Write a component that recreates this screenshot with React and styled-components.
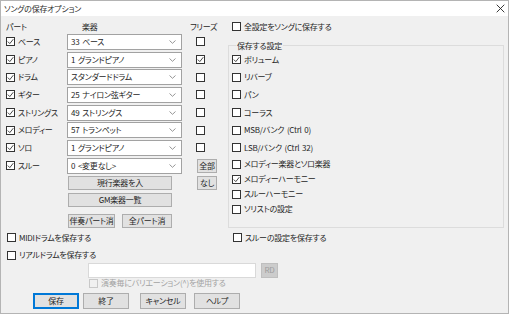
import React from 'react';
import styled, { createGlobalStyle } from 'styled-components';

const FONT = `"Noto Sans CJK JP", "Noto Sans", sans-serif`;

const GlobalStyle = createGlobalStyle`
  html, body { margin: 0; padding: 0; background: #f0f0f0; }
  * { box-sizing: border-box; }
`;

const Window = styled.div`
  width: 509px;
  height: 314px;
  border: 1px solid #b4b4b4;
  background: #f0f0f0;
  display: flex;
  flex-direction: column;
  font-family: ${FONT};
  font-size: 8px;
  letter-spacing: -0.25px;
  word-spacing: 1.2px;
  line-height: 1;
  color: #262626;
  font-feature-settings: "palt";
  overflow: hidden;
  white-space: nowrap;
`;

const TitleBar = styled.div`
  flex: none;
  height: 15px;
  background: #fff;
  display: flex;
  align-items: center;
  justify-content: space-between;
  padding: 0 3px 0 3px;
`;

const Title = styled.span`
  color: #2e2e2e;
`;

const Content = styled.div`
  flex: 1;
  display: flex;
  flex-direction: column;
  padding: 4px 4px 0 5px;
`;

const Top = styled.div`
  display: flex;
`;

const PartGrid = styled.div`
  width: 222px;
  flex: none;
  display: grid;
  grid-template-columns: 61px 115px 36px;
  grid-template-rows: 13px repeat(8, 17.7px) 17px 17px 19px;
  align-items: center;
`;

const Header = styled.span`
  justify-self: start;
  margin-left: ${(p) => p.$ml || 0}px;
`;

const CheckLabel = styled.label`
  display: flex;
  align-items: center;
  gap: ${(p) => (p.$gap != null ? p.$gap : 3)}px;
  color: ${(p) => (p.$disabled ? '#a3a3a3' : 'inherit')};
`;

const Box = styled.span`
  flex: none;
  width: 9px;
  height: 9px;
  border: 1px solid ${(p) => (p.$disabled ? '#c8c8c8' : '#333')};
  background: ${(p) => (p.$disabled ? '#f0f0f0' : '#fff')};
  display: flex;
  align-items: center;
  justify-content: center;
`;

const FreezeCell = styled.div`
  justify-self: center;
  display: flex;
`;

const Combo = styled.div`
  height: 16px;
  width: 115px;
  border: 1px solid #a2a2a2;
  background: #fff;
  display: flex;
  align-items: center;
  justify-content: space-between;
  padding: 0 5px 0 3px;
`;

const Button = styled.div`
  height: ${(p) => p.$h || 14}px;
  width: ${(p) => p.$w}px;
  margin-left: ${(p) => p.$ml || 0}px;
  background: ${(p) => (p.$disabled ? '#cccccc' : '#e1e1e1')};
  border: 1px solid ${(p) => (p.$primary ? '#0078d7' : p.$disabled ? '#bfbfbf' : '#adadad')};
  box-shadow: ${(p) => (p.$primary ? 'inset 0 0 0 1px #0078d7' : 'none')};
  color: ${(p) => (p.$disabled ? '#9d9d9d' : 'inherit')};
  display: flex;
  align-items: center;
  justify-content: center;
  flex: none;
`;

const GridButtonCell = styled.div`
  grid-column: ${(p) => p.$col};
  align-self: ${(p) => p.$align || 'center'};
  display: flex;
`;

const RightPanel = styled.div`
  flex: 1;
  display: flex;
  flex-direction: column;
`;

const TopOption = styled.div`
  height: 13px;
  display: flex;
  align-items: center;
  padding-left: 4px;
`;

const Group = styled.fieldset`
  margin: 7px 0 0 0;
  padding: 0 0 10px 3px;
  border: 1px solid #dcdcdc;
  min-width: 0;
`;

const Legend = styled.legend`
  margin-left: 4px;
  padding: 0 1px;
  line-height: 11px;
`;

const GroupRow = styled.div`
  height: ${(p) => p.$h}px;
  display: flex;
  align-items: center;
`;

const OptionRow = styled.div`
  height: ${(p) => p.$h}px;
  display: flex;
  align-items: center;
  padding-left: ${(p) => p.$pl || 0}px;
`;

const LeftSlot = styled.div`
  width: 226px;
  flex: none;
  display: flex;
`;

const TextInput = styled.div`
  width: 168px;
  height: 15px;
  margin-right: 5px;
  background: #fff;
  border: 1px solid #d9d9d9;
`;

const ButtonRow = styled.div`
  margin-top: 4px;
  display: flex;
  padding-left: 27px;
`;

const Check = ({ checked, disabled }) => (
  <Box $disabled={disabled}>
    {checked && (
      <svg width="7" height="7" viewBox="0 0 7 7">
        <polyline points="0.8,3.6 2.8,5.6 6.3,1.2" fill="none" stroke="#333" strokeWidth="0.9" />
      </svg>
    )}
  </Box>
);

const Arrow = () => (
  <svg width="7" height="4" viewBox="0 0 7 4">
    <polyline points="0.5,0.5 3.5,3.3 6.5,0.5" fill="none" stroke="#8a8a8a" strokeWidth="0.9" />
  </svg>
);

const CloseIcon = () => (
  <svg width="9" height="9" viewBox="0 0 9 9">
    <path d="M0.7 0.7 L8.3 8.3 M8.3 0.7 L0.7 8.3" stroke="#222" strokeWidth="0.9" />
  </svg>
);

const parts = [
  { name: 'ベース', inst: '33 ベース', freeze: false },
  { name: 'ピアノ', inst: '1 グランドピアノ', freeze: true },
  { name: 'ドラム', inst: 'スタンダードドラム', freeze: false },
  { name: 'ギター', inst: '25 ナイロン弦ギター', freeze: false },
  { name: 'ストリングス', inst: '49 ストリングス', freeze: false },
  { name: 'メロディー', inst: '57 トランペット', freeze: false },
  { name: 'ソロ', inst: '1 グランドピアノ', freeze: false },
  { name: 'スルー', inst: '0 <変更なし>', freeze: null },
];

const settingsTall = [
  { label: 'ボリューム', checked: true },
  { label: 'リバーブ', checked: false },
  { label: 'パン', checked: false },
  { label: 'コーラス', checked: false },
  { label: 'MSB/バンク (Ctrl 0)', checked: false },
  { label: 'LSB/バンク (Ctrl 32)', checked: false },
];
const settingsShort = [
  { label: 'メロディー楽器とソロ楽器', checked: false },
  { label: 'メロディーハーモニー', checked: true },
  { label: 'スルーハーモニー', checked: false },
  { label: 'ソリストの設定', checked: false },
];

export default function App() {
  return (
    <>
      <GlobalStyle />
      <Window>
        <TitleBar>
          <Title>ソングの保存オプション</Title>
          <CloseIcon />
        </TitleBar>
        <Content>
          <Top>
            <PartGrid>
              <Header>パート</Header>
              <Header $ml={15}>楽器</Header>
              <Header $ml={8}>フリーズ</Header>
              {parts.map((p) => (
                <React.Fragment key={p.name}>
                  <CheckLabel>
                    <Check checked />
                    {p.name}
                  </CheckLabel>
                  <Combo>
                    <span>{p.inst}</span>
                    <Arrow />
                  </Combo>
                  {p.freeze === null ? (
                    <GridButtonCell $col={3}>
                      <Button $w={20} $ml={15}>全部</Button>
                    </GridButtonCell>
                  ) : (
                    <FreezeCell>
                      <Check checked={p.freeze} />
                    </FreezeCell>
                  )}
                </React.Fragment>
              ))}
              <GridButtonCell $col={2}>
                <Button $w={104} $ml={1}>現行楽器を入</Button>
              </GridButtonCell>
              <GridButtonCell $col={3}>
                <Button $w={20} $ml={15}>なし</Button>
              </GridButtonCell>
              <GridButtonCell $col={2}>
                <Button $w={104} $ml={1}>GM楽器一覧</Button>
              </GridButtonCell>
              <GridButtonCell $col={2} $align="end">
                <Button $w={47} $ml={1}>伴奏パート消</Button>
                <Button $w={50} $ml={7}>全パート消</Button>
              </GridButtonCell>
            </PartGrid>
            <RightPanel>
              <TopOption>
                <CheckLabel>
                  <Check />
                  全設定をソングに保存する
                </CheckLabel>
              </TopOption>
              <Group>
                <Legend>保存する設定</Legend>
                {settingsTall.map((s) => (
                  <GroupRow key={s.label} $h={17.6}>
                    <CheckLabel>
                      <Check checked={s.checked} />
                      {s.label}
                    </CheckLabel>
                  </GroupRow>
                ))}
                {settingsShort.map((s) => (
                  <GroupRow key={s.label} $h={15}>
                    <CheckLabel>
                      <Check checked={s.checked} />
                      {s.label}
                    </CheckLabel>
                  </GroupRow>
                ))}
              </Group>
            </RightPanel>
          </Top>
          <OptionRow $h={20} $pl={1}>
            <LeftSlot>
              <CheckLabel>
                <Check />
                MIDIドラムを保存する
              </CheckLabel>
            </LeftSlot>
            <CheckLabel>
              <Check />
              スルーの設定を保存する
            </CheckLabel>
          </OptionRow>
          <OptionRow $h={15} $pl={1}>
            <CheckLabel>
              <Check />
              リアルドラムを保存する
            </CheckLabel>
          </OptionRow>
          <OptionRow $h={15} $pl={82}>
            <TextInput />
            <Button $w={17} $h={15} $disabled>RD</Button>
          </OptionRow>
          <OptionRow $h={11} $pl={83}>
            <CheckLabel $disabled>
              <Check disabled />
              演奏毎にバリエーション(^)を使用する
            </CheckLabel>
          </OptionRow>
          <ButtonRow>
            <Button $w={46} $h={16} $primary>保存</Button>
            <Button $w={46} $h={16} $ml={4}>終了</Button>
            <Button $w={46} $h={16} $ml={11}>キャンセル</Button>
            <Button $w={46} $h={16} $ml={8}>ヘルプ</Button>
          </ButtonRow>
        </Content>
      </Window>
    </>
  );
}
